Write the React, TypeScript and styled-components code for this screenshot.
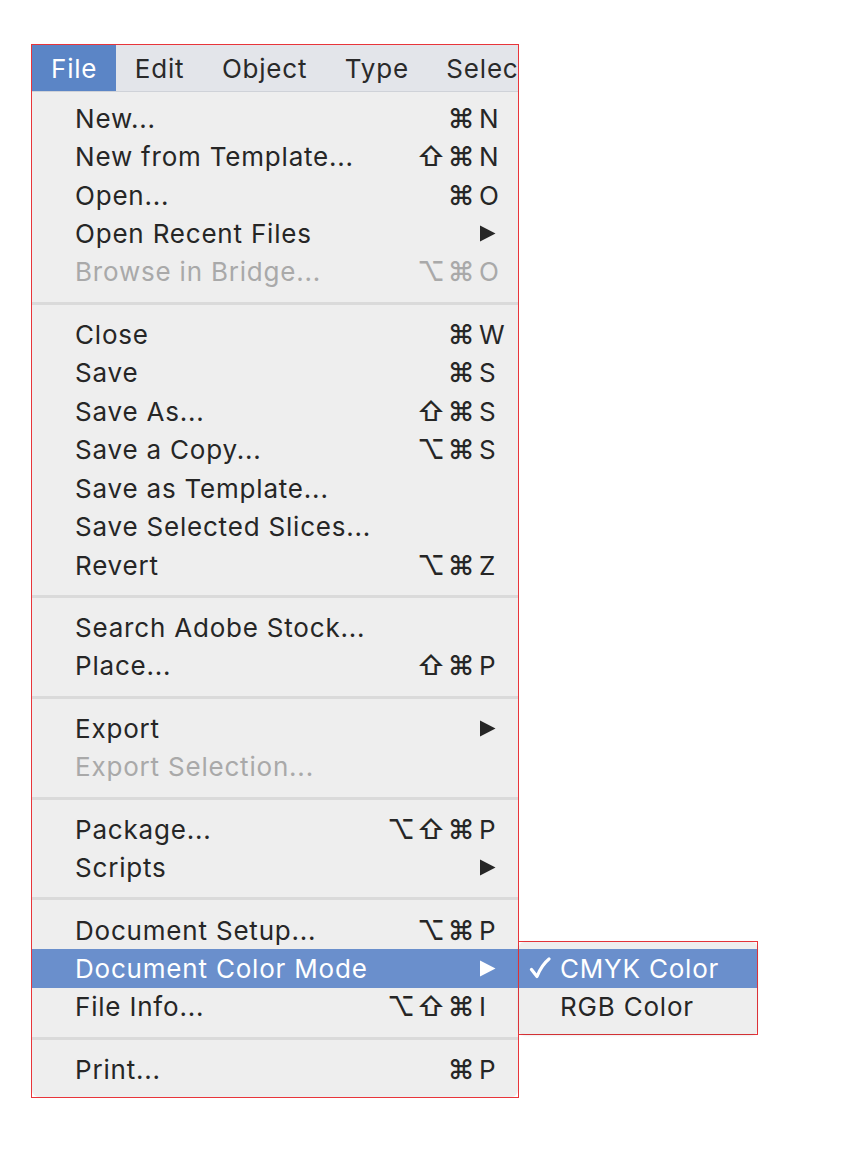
import React from "react";
import styled, { createGlobalStyle } from "styled-components";

const GlobalStyle = createGlobalStyle`
  html, body {
    margin: 0;
    padding: 0;
    background: #ffffff;
  }
  body {
    font-family: "Inter", "DejaVu Sans", sans-serif;
  }
`;

type Item = {
  label: string;
  mods?: string[];
  keyChar?: string;
  arrow?: boolean;
  disabled?: boolean;
  active?: boolean;
};

const groups: Item[][] = [
  [
    { label: "New...", mods: ["⌘"], keyChar: "N" },
    { label: "New from Template...", mods: ["⇧", "⌘"], keyChar: "N" },
    { label: "Open...", mods: ["⌘"], keyChar: "O" },
    { label: "Open Recent Files", arrow: true },
    { label: "Browse in Bridge...", mods: ["⌥", "⌘"], keyChar: "O", disabled: true },
  ],
  [
    { label: "Close", mods: ["⌘"], keyChar: "W" },
    { label: "Save", mods: ["⌘"], keyChar: "S" },
    { label: "Save As...", mods: ["⇧", "⌘"], keyChar: "S" },
    { label: "Save a Copy...", mods: ["⌥", "⌘"], keyChar: "S" },
    { label: "Save as Template..." },
    { label: "Save Selected Slices..." },
    { label: "Revert", mods: ["⌥", "⌘"], keyChar: "Z" },
  ],
  [
    { label: "Search Adobe Stock..." },
    { label: "Place...", mods: ["⇧", "⌘"], keyChar: "P" },
  ],
  [
    { label: "Export", arrow: true },
    { label: "Export Selection...", disabled: true },
  ],
  [
    { label: "Package...", mods: ["⌥", "⇧", "⌘"], keyChar: "P" },
    { label: "Scripts", arrow: true },
  ],
  [
    { label: "Document Setup...", mods: ["⌥", "⌘"], keyChar: "P" },
    { label: "Document Color Mode", arrow: true, active: true },
    { label: "File Info...", mods: ["⌥", "⇧", "⌘"], keyChar: "I" },
  ],
  [{ label: "Print...", mods: ["⌘"], keyChar: "P" }],
];

const menuBar = ["File", "Edit", "Object", "Type", "Select"];

const Arrow: React.FC = () => (
  <svg width="17" height="17" viewBox="0 0 17 17">
    <path d="M1 0.5 L16.5 8.5 L1 16.5 Z" fill="currentColor" />
  </svg>
);

const CheckMark: React.FC = () => (
  <svg width="22" height="22" viewBox="0 0 22 22">
    <path
      d="M2.5 12.5 L8 19.5 C11 12 15 6 20 2"
      fill="none"
      stroke="currentColor"
      strokeWidth="3.2"
      strokeLinecap="round"
      strokeLinejoin="round"
    />
  </svg>
);

const App: React.FC = () => {
  return (
    <Page>
      <GlobalStyle />
      <Frame>
        <Panel>
          <Bar>
            {menuBar.map((name, i) => (
              <BarItem key={name} $open={i === 0}>
                {name}
              </BarItem>
            ))}
          </Bar>
          <List>
            {groups.map((group, gi) => (
              <React.Fragment key={gi}>
                {gi > 0 && <Separator />}
                {group.map((item) => (
                  <Row key={item.label} $disabled={item.disabled} $active={item.active}>
                    <Label>{item.label}</Label>
                    {item.mods && (
                      <Mods>
                        {item.mods.map((m, mi) => (
                          <Mod key={mi}>{m}</Mod>
                        ))}
                      </Mods>
                    )}
                    <KeySlot>{item.arrow ? <Arrow /> : item.keyChar}</KeySlot>
                    {item.active && (
                      <SubFrame>
                        <SubPanel>
                          <SubRow $active>
                            <Check>
                              <CheckMark />
                            </Check>
                            CMYK Color
                          </SubRow>
                          <SubRow>RGB Color</SubRow>
                        </SubPanel>
                      </SubFrame>
                    )}
                  </Row>
                ))}
              </React.Fragment>
            ))}
          </List>
        </Panel>
      </Frame>
    </Page>
  );
};

export default App;

const Page = styled.div`
  padding: 44px 0 40px 31px;
  font-size: 26px;
  letter-spacing: 0.8px;
  color: #262626;
`;

const Frame = styled.div`
  width: 486px;
  border: 1px solid #e8353a;
  background: #ffffff;
`;

const Panel = styled.div`
  background: #eeeeee;
  border-radius: 0 0 7px 7px;
  padding-bottom: 8.6px;
`;

const Bar = styled.div`
  display: flex;
  height: 46px;
  overflow: hidden;
  white-space: nowrap;
  background: #e3e5ea;
  border-bottom: 1px solid #cfd2d8;
`;

const BarItem = styled.div<{ $open?: boolean }>`
  display: flex;
  align-items: center;
  padding: 0 18.5px 0 19px;
  flex-shrink: 0;
  background: ${({ $open }) => ($open ? "#5b85c6" : "transparent")};
  color: ${({ $open }) => ($open ? "#ffffff" : "#2a2a2a")};
`;

const List = styled.div`
  padding-top: 7px;
`;

const Separator = styled.div`
  height: 24px;
  display: flex;
  align-items: center;
  &::before {
    content: "";
    flex: 1;
    height: 3px;
    background: #dadada;
  }
`;

const Row = styled.div<{ $disabled?: boolean; $active?: boolean }>`
  position: relative;
  display: flex;
  align-items: center;
  height: 38.45px;
  padding: 0 16px 0 43px;
  white-space: nowrap;
  color: ${({ $disabled, $active }) =>
    $active ? "#ffffff" : $disabled ? "#a9a9a9" : "#262626"};
  background: ${({ $active }) => ($active ? "#6a8fcc" : "transparent")};
`;

const Label = styled.span`
  flex: 1;
`;

const Mods = styled.span`
  display: flex;
  margin-right: 3px;
`;

const Mod = styled.span`
  width: 30px;
  text-align: center;
  letter-spacing: 0;
  font-size: 27px;
  font-weight: 500;
`;

const KeySlot = styled.span`
  width: 23px;
  display: flex;
  align-items: center;
  letter-spacing: 0;
`;

const SubFrame = styled.div`
  position: absolute;
  left: 100%;
  top: -8px;
  width: 238px;
  border: 1px solid #e8353a;
  background: #ffffff;
`;

const SubPanel = styled.div`
  background: #eeeeee;
  border-radius: 6px;
  padding: 7px 0 8px;
  box-shadow: 0 1px 3px rgba(0, 0, 0, 0.15);
`;

const SubRow = styled.div<{ $active?: boolean }>`
  position: relative;
  height: 38.45px;
  display: flex;
  align-items: center;
  padding-left: 41px;
  color: ${({ $active }) => ($active ? "#ffffff" : "#262626")};
  background: ${({ $active }) => ($active ? "#6a8fcc" : "transparent")};
`;

const Check = styled.span`
  position: absolute;
  left: 10px;
  top: 8px;
  display: flex;
`;
